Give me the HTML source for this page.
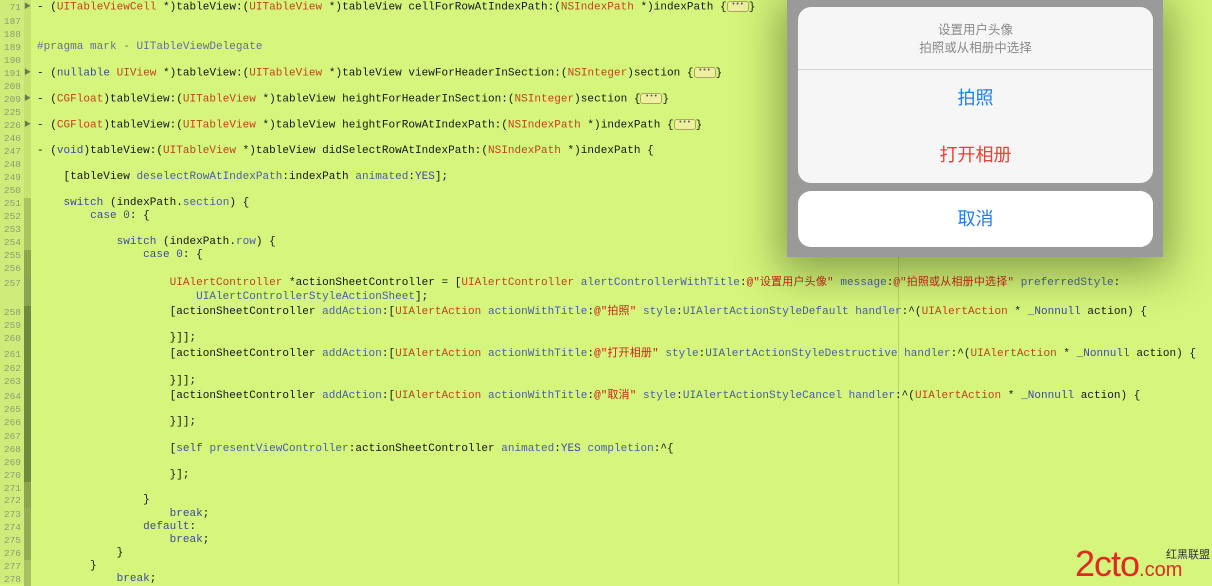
<!DOCTYPE html>
<html><head><meta charset="utf-8"><style>
*{margin:0;padding:0}
body{width:1212px;height:584px;overflow:hidden;background:#d5f57c;position:relative;font-family:"Liberation Mono","Noto Sans CJK SC",monospace;font-size:11px;color:#151515}
.gut{position:absolute;left:0;top:0;width:24px;height:584px;background:#cfec7a}
.w{position:absolute;left:0;top:2px;width:1212px;height:584px}
.ln{position:absolute;left:0;width:21px;text-align:right;font-size:9.5px;color:#8f9c6e;height:13px;line-height:13px}
.st{position:absolute;left:24px;width:7px}
.c{position:absolute;left:37px;white-space:pre;height:13px;line-height:13px;letter-spacing:0.03px}
.fa{position:absolute;left:24px;font-size:7px;color:#6d7a4a;line-height:13px;height:13px}
.t{color:#c2441c}.m{color:#4a5da6}.k{color:#3d4a9c}.p{color:#6b6ba0}.s{color:#cc2418}
.z{letter-spacing:0.2px}
.e{display:inline-block;width:20px;height:9px;border:1px solid #a8a858;border-radius:3px;background:#eef0a0;font-size:7px;line-height:7px;text-align:center;vertical-align:middle;color:#555}
.guide{position:absolute;left:898px;top:0;width:1px;height:584px;background:#b9d46a}
.ov{position:absolute;left:787px;top:0;width:376px;height:257px;background:#9a9a9a;box-shadow:0 8px 40px 8px rgba(40,60,10,0.45)}
.sh{position:absolute;left:11px;top:7px;width:355px;height:176px;background:#f6f6f6;border-radius:13px;font-family:"Liberation Sans","Noto Sans CJK SC",sans-serif;text-align:center}
.cn{position:absolute;left:11px;top:191px;width:355px;height:56px;background:#fff;border-radius:13px;font-family:"Liberation Sans","Noto Sans CJK SC",sans-serif;text-align:center;color:#1a7ef5;font-size:18px;line-height:56px}
.wm{position:absolute;left:1075px;top:543px;font-family:"Liberation Sans",sans-serif;color:#e02a22;white-space:nowrap}
</style></head><body>
<div class="gut"></div>
<div class="guide"></div>
<div class="st" style="top:0;height:198px;background:#c6e270"></div>
<div class="st" style="top:198px;height:52px;background:#a9c45e"></div>
<div class="st" style="top:250px;height:26px;background:#8ea64c"></div>
<div class="st" style="top:276px;height:30px;background:#8aa455"></div>
<div class="st" style="top:306px;height:176px;background:#6f8a3d"></div>
<div class="st" style="top:482px;height:26px;background:#8aa450"></div>
<div class="st" style="top:508px;height:52px;background:#93ad55"></div>
<div class="st" style="top:560px;height:26px;background:#a8c262"></div>
<div class="w">
<div class="ln" style="top:-1px">71</div><div class="fa" style="top:-1px">▶</div>
<div class="c" style="top:-1px">- (<span class="t">UITableViewCell</span> *)tableView:(<span class="t">UITableView</span> *)tableView cellForRowAtIndexPath:(<span class="t">NSIndexPath</span> *)indexPath {<span class="e">•••</span>}</div>
<div class="ln" style="top:13px">187</div>
<div class="ln" style="top:26px">188</div>
<div class="ln" style="top:39px">189</div><div class="c p" style="top:39px">#pragma mark - UITableViewDelegate</div>
<div class="ln" style="top:52px">190</div>
<div class="ln" style="top:65px">191</div><div class="fa" style="top:65px">▶</div>
<div class="c" style="top:65px">- (<span class="k">nullable</span> <span class="t">UIView</span> *)tableView:(<span class="t">UITableView</span> *)tableView viewForHeaderInSection:(<span class="t">NSInteger</span>)section {<span class="e">•••</span>}</div>
<div class="ln" style="top:78px">208</div>
<div class="ln" style="top:91px">209</div><div class="fa" style="top:91px">▶</div>
<div class="c" style="top:91px">- (<span class="t">CGFloat</span>)tableView:(<span class="t">UITableView</span> *)tableView heightForHeaderInSection:(<span class="t">NSInteger</span>)section {<span class="e">•••</span>}</div>
<div class="ln" style="top:104px">225</div>
<div class="ln" style="top:117px">226</div><div class="fa" style="top:117px">▶</div>
<div class="c" style="top:117px">- (<span class="t">CGFloat</span>)tableView:(<span class="t">UITableView</span> *)tableView heightForRowAtIndexPath:(<span class="t">NSIndexPath</span> *)indexPath {<span class="e">•••</span>}</div>
<div class="ln" style="top:130px">246</div>
<div class="ln" style="top:143px">247</div>
<div class="c" style="top:143px">- (<span class="k">void</span>)tableView:(<span class="t">UITableView</span> *)tableView didSelectRowAtIndexPath:(<span class="t">NSIndexPath</span> *)indexPath {</div>
<div class="ln" style="top:156px">248</div>
<div class="ln" style="top:169px">249</div>
<div class="c" style="top:169px">    [tableView <span class="m">deselectRowAtIndexPath</span>:indexPath <span class="m">animated</span>:<span class="k">YES</span>];</div>
<div class="ln" style="top:182px">250</div>
<div class="ln" style="top:195px">251</div><div class="c" style="top:195px">    <span class="k">switch</span> (indexPath.<span class="m">section</span>) {</div>
<div class="ln" style="top:208px">252</div><div class="c" style="top:208px">        <span class="k">case</span> <span class="k">0</span>: {</div>
<div class="ln" style="top:221px">253</div>
<div class="ln" style="top:234px">254</div><div class="c" style="top:234px">            <span class="k">switch</span> (indexPath.<span class="m">row</span>) {</div>
<div class="ln" style="top:247px">255</div><div class="c" style="top:247px">                <span class="k">case</span> <span class="k">0</span>: {</div>
<div class="ln" style="top:260px">256</div>
<div class="ln" style="top:275px">257</div>
<div class="c" style="top:275px">                    <span class="t">UIAlertController</span> *actionSheetController = [<span class="t">UIAlertController</span> <span class="m">alertControllerWithTitle</span>:<span class="s">@"<span class="z">设置用户头像</span>"</span> <span class="m">message</span>:<span class="s">@"<span class="z">拍照或从相册中选择</span>"</span> <span class="m">preferredStyle</span>:</div>
<div class="c" style="top:289px">                        <span class="m">UIAlertControllerStyleActionSheet</span>];</div>
<div class="ln" style="top:304px">258</div>
<div class="c" style="top:304px">                    [actionSheetController <span class="m">addAction</span>:[<span class="t">UIAlertAction</span> <span class="m">actionWithTitle</span>:<span class="s">@"<span class="z">拍照</span>"</span> <span class="m">style</span>:<span class="m">UIAlertActionStyleDefault</span> <span class="m">handler</span>:^(<span class="t">UIAlertAction</span> * <span class="k">_Nonnull</span> action) {</div>
<div class="ln" style="top:317px">259</div>
<div class="ln" style="top:330px">260</div><div class="c" style="top:330px">                    }]];</div>
<div class="ln" style="top:346px">261</div>
<div class="c" style="top:346px">                    [actionSheetController <span class="m">addAction</span>:[<span class="t">UIAlertAction</span> <span class="m">actionWithTitle</span>:<span class="s">@"<span class="z">打开相册</span>"</span> <span class="m">style</span>:<span class="m">UIAlertActionStyleDestructive</span> <span class="m">handler</span>:^(<span class="t">UIAlertAction</span> * <span class="k">_Nonnull</span> action) {</div>
<div class="ln" style="top:360px">262</div>
<div class="ln" style="top:373px">263</div><div class="c" style="top:373px">                    }]];</div>
<div class="ln" style="top:388px">264</div>
<div class="c" style="top:388px">                    [actionSheetController <span class="m">addAction</span>:[<span class="t">UIAlertAction</span> <span class="m">actionWithTitle</span>:<span class="s">@"<span class="z">取消</span>"</span> <span class="m">style</span>:<span class="m">UIAlertActionStyleCancel</span> <span class="m">handler</span>:^(<span class="t">UIAlertAction</span> * <span class="k">_Nonnull</span> action) {</div>
<div class="ln" style="top:401px">265</div>
<div class="ln" style="top:414px">266</div><div class="c" style="top:414px">                    }]];</div>
<div class="ln" style="top:428px">267</div>
<div class="ln" style="top:441px">268</div><div class="c" style="top:441px">                    [<span class="k">self</span> <span class="m">presentViewController</span>:actionSheetController <span class="m">animated</span>:<span class="k">YES</span> <span class="m">completion</span>:^{</div>
<div class="ln" style="top:454px">269</div>
<div class="ln" style="top:467px">270</div><div class="c" style="top:467px">                    }];</div>
<div class="ln" style="top:480px">271</div>
<div class="ln" style="top:492px">272</div><div class="c" style="top:492px">                }</div>
<div class="ln" style="top:506px">273</div><div class="c" style="top:506px">                    <span class="k">break</span>;</div>
<div class="ln" style="top:519px">274</div><div class="c" style="top:519px">                <span class="k">default</span>:</div>
<div class="ln" style="top:532px">275</div><div class="c" style="top:532px">                    <span class="k">break</span>;</div>
<div class="ln" style="top:545px">276</div><div class="c" style="top:545px">            }</div>
<div class="ln" style="top:558px">277</div><div class="c" style="top:558px">        }</div>
<div class="ln" style="top:571px">278</div><div class="c" style="top:571px">            <span class="k">break</span>;</div>
</div>

<div class="wm"><span style="font-size:36px;letter-spacing:-1px">2cto</span><span style="font-size:20px">.com</span></div>
<div style="position:absolute;left:1166px;top:546px;font-size:11px;color:#333;font-family:'Noto Sans CJK SC',sans-serif">红黑联盟</div>

<div class="ov">
 <div class="sh">
  <div style="position:absolute;top:14px;width:100%;font-size:12.5px;color:#8a8a8a;line-height:18px">设置用户头像<br>拍照或从相册中选择</div>
  <div style="position:absolute;top:62px;left:0;width:100%;height:1px;background:#d4d4d4"></div>
  <div style="position:absolute;top:78px;width:100%;font-size:18px;color:#1a7ef5;line-height:26px">拍照</div>
  <div style="position:absolute;top:135px;width:100%;font-size:18px;color:#f23c36;line-height:26px">打开相册</div>
 </div>
 <div class="cn">取消</div>
</div>
</body></html>
